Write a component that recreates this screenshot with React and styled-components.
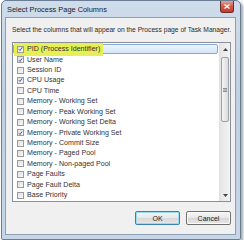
import React from "react";
import styled, { createGlobalStyle } from "styled-components";

const GlobalStyle = createGlobalStyle`
  body {
    margin: 0;
    background: #ffffff;
    font-family: "Liberation Sans", Arial, sans-serif;
  }
`;

const Window = styled("div")`
  box-sizing: border-box;
  width: 240px;
  height: 240px;
  margin-left: 1px;
  border: 1px solid #6a7d95;
  border-radius: 5px 5px 2px 2px;
  background: linear-gradient(180deg, #cfdcea 0%, #bfd0e4 40%, #c6d6e8 100%);
  box-shadow: 2px 2px 3px rgba(0, 0, 0, 0.35);
  padding: 0 4px 4px 3px;
  display: flex;
  flex-direction: column;
`;

const TitleBar = styled("div")`
  height: 16px;
  display: flex;
  align-items: flex-start;
`;

const Title = styled("span")`
  font-size: 7.4px;
  color: #1a1a1a;
  padding: 4px 0 0 2px;
`;

const CloseButton = styled("div")`
  margin-left: auto;
  margin-right: 2px;
  width: 12px;
  height: 11px;
  border: 1px solid #6b2b2b;
  border-top: none;
  border-radius: 0 0 3px 3px;
  background: linear-gradient(180deg, #e0a49a 0%, #cf5a48 50%, #c33d28 100%);
  display: flex;
  align-items: center;
  justify-content: center;
`;

const Client = styled("div")`
  flex: 1;
  background: #f0f0f0;
  border: 1px solid #8e9fb4;
  padding: 0 4px 0 6px;
  display: flex;
  flex-direction: column;
`;

const Description = styled("p")`
  margin: 8px 0 0 0;
  font-size: 6.7px;
  color: #2a2a2a;
  white-space: nowrap;
`;

const ListBox = styled("div")`
  margin-top: 9px;
  height: 160px;
  box-sizing: border-box;
  border: 1px solid #8a8f98;
  background: #fff;
  display: flex;
`;

const Rows = styled("div")`
  flex: 1;
  padding-top: 1px;
`;

const Row = styled("div")`
  height: 10.43px;
  display: flex;
  align-items: center;
  box-sizing: border-box;
  padding-left: 3px;
  background: ${p => (p.selected ? "linear-gradient(180deg, #eef5fd, #d5e6fa)" : "transparent")};
  border: 1px solid ${p => (p.selected ? "#86a9d6" : "transparent")};
  border-radius: 2px;
  margin-right: 1px;
`;

const Marker = styled("span")`
  display: inline-flex;
  align-items: center;
  background: #e6ef55;
  padding: 0 3px 0 3px;
  height: 13px;
  margin-left: -3px;
`;

const Check = styled("span")`
  box-sizing: border-box;
  width: 7px;
  height: 7px;
  border: 1px solid #9a9a9a;
  background: linear-gradient(135deg, #e0e0e0, #f8f8f8);
  display: inline-flex;
  align-items: center;
  justify-content: center;
  margin-right: 3px;
  flex-shrink: 0;
`;

const Label = styled("span")`
  font-size: 7.1px;
  color: #333;
  white-space: nowrap;
`;

const ScrollBar = styled("div")`
  width: 10px;
  background: linear-gradient(90deg, #e6e6e6, #f2f2f2);
  border-left: 1px solid #e0e0e0;
  display: flex;
  flex-direction: column;
`;

const Arrow = styled("div")`
  height: 12px;
  display: flex;
  align-items: center;
  justify-content: center;
`;

const Track = styled("div")`
  flex: 1;
  padding-top: 2px;
`;

const Thumb = styled("div")`
  height: 63px;
  margin: 0 1px;
  border: 1px solid #9aa0a8;
  border-radius: 2px;
  background: linear-gradient(90deg, #f4f4f4, #dcdcdc);
  display: flex;
  align-items: center;
  justify-content: center;
`;

const Buttons = styled("div")`
  display: flex;
  justify-content: flex-end;
  gap: 6px;
  margin-top: 9px;
`;

const Button = styled("div")`
  box-sizing: border-box;
  width: 45px;
  height: 14px;
  border: 1px solid ${p => (p.focused ? "#3c7fb1" : "#707070")};
  border-radius: 2px;
  background: linear-gradient(180deg, #f6f6f6 0%, #e8e8e8 50%, #d8d8d8 51%, #e6e6e6 100%);
  box-shadow: ${p => (p.focused ? "inset 0 0 0 1px #97dcf5" : "inset 0 0 0 1px #fafafa")};
  font-size: 7px;
  color: #222;
  display: flex;
  align-items: center;
  justify-content: center;
`;

const columns = [
  { name: "PID (Process Identifier)", checked: true, selected: true, marked: true },
  { name: "User Name", checked: true },
  { name: "Session ID" },
  { name: "CPU Usage", checked: true },
  { name: "CPU Time" },
  { name: "Memory - Working Set" },
  { name: "Memory - Peak Working Set" },
  { name: "Memory - Working Set Delta" },
  { name: "Memory - Private Working Set", checked: true },
  { name: "Memory - Commit Size" },
  { name: "Memory - Paged Pool" },
  { name: "Memory - Non-paged Pool" },
  { name: "Page Faults" },
  { name: "Page Fault Delta" },
  { name: "Base Priority" },
];

const Tick = () => (
  <svg width="6" height="6" viewBox="0 0 6 6">
    <path d="M1 3.2 L2.4 4.8 L5 1" fill="none" stroke="#2a3f8c" strokeWidth="1" />
  </svg>
);

const Item = ({ col }) => {
  const body = (
    <>
      <Check>{col.checked && <Tick />}</Check>
      <Label>{col.name}</Label>
    </>
  );
  return (
    <Row selected={col.selected}>
      {col.marked ? <Marker>{body}</Marker> : body}
    </Row>
  );
};

export default function App() {
  return (
    <>
      <GlobalStyle />
      <Window>
        <TitleBar>
          <Title>Select Process Page Columns</Title>
          <CloseButton>
            <svg width="6" height="5" viewBox="0 0 6 5">
              <path d="M0.5 0.5 L5.5 4.5 M5.5 0.5 L0.5 4.5" stroke="#fff" strokeWidth="1.3" />
            </svg>
          </CloseButton>
        </TitleBar>
        <Client>
          <Description>
            Select the columns that will appear on the Process page of Task Manager.
          </Description>
          <ListBox>
            <Rows>
              {columns.map(c => (
                <Item key={c.name} col={c} />
              ))}
            </Rows>
            <ScrollBar>
              <Arrow>
                <svg width="5" height="3" viewBox="0 0 5 3">
                  <path d="M0 3 L2.5 0 L5 3 Z" fill="#444" />
                </svg>
              </Arrow>
              <Track>
                <Thumb>
                  <svg width="4" height="4" viewBox="0 0 4 4">
                    <path d="M0 0.5 H4 M0 2 H4 M0 3.5 H4" stroke="#777" strokeWidth="0.8" />
                  </svg>
                </Thumb>
              </Track>
              <Arrow>
                <svg width="5" height="3" viewBox="0 0 5 3">
                  <path d="M0 0 L2.5 3 L5 0 Z" fill="#444" />
                </svg>
              </Arrow>
            </ScrollBar>
          </ListBox>
          <Buttons>
            <Button focused>OK</Button>
            <Button>Cancel</Button>
          </Buttons>
        </Client>
      </Window>
    </>
  );
}
